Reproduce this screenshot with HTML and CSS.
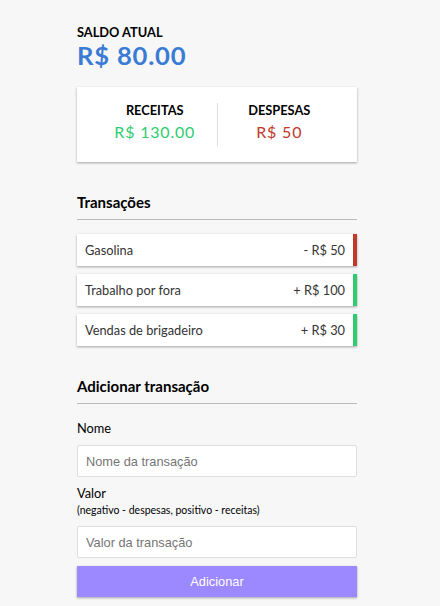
FILE: index.html
```html
<!DOCTYPE html>
<html lang="pt-BR">
<head>
<meta charset="UTF-8">
<title>Controle de despesas</title>
<link rel="stylesheet" href="styles.css">
</head>
<body>
<div class="container">
  <h4>Saldo atual</h4>
  <h1 class="balance">R$ 80.00</h1>

  <div class="inc-exp-container">
    <div>
      <h4>Receitas</h4>
      <p class="money plus">R$ 130.00</p>
    </div>
    <div>
      <h4>Despesas</h4>
      <p class="money minus">R$ 50</p>
    </div>
  </div>

  <h3>Transações</h3>
  <ul class="list">
    <li class="minus">Gasolina <span>- R$ 50</span></li>
    <li class="plus">Trabalho por fora <span>+ R$ 100</span></li>
    <li class="plus">Vendas de brigadeiro <span>+ R$ 30</span></li>
  </ul>

  <h3>Adicionar transação</h3>
  <form class="form">
    <div class="form-control">
      <label for="text">Nome</label>
      <input type="text" id="text" placeholder="Nome da transação">
    </div>
    <div class="form-control">
      <label class="label-two" for="amount">Valor <br><small>(negativo - despesas, positivo - receitas)</small></label>
      <input type="number" id="amount" placeholder="Valor da transação">
    </div>
    <button class="btn" type="button">Adicionar</button>
  </form>
</div>
</body>
</html>
```
FILE: styles.css
```css
* { box-sizing: border-box; }

body {
  background-color: #f7f7f7;
  display: flex;
  flex-direction: column;
  align-items: center;
  margin: 0;
  padding-right: 6px;
  font-family: "Lato", "Liberation Sans", sans-serif;
  font-size: 12.8px;
  color: #000;
}

.container {
  margin: 25px auto 24px;
  width: 280px;
}

h1 {
  letter-spacing: 0.8px;
  margin: 0;
  font-size: 25.6px;
  line-height: 31px;
  color: #3a7bd5;
}

h3 {
  font-size: 15px;
  line-height: 17px;
  border-bottom: 1px solid #bbb;
  padding-bottom: 8px;
  margin: 32px 0 8px;
}

h4 {
  margin: 0;
  font-size: 12.8px;
  line-height: 15px;
  text-transform: uppercase;
}

.inc-exp-container {
  background-color: #fff;
  box-shadow: 0 1px 3px rgba(0,0,0,0.12), 0 1px 2px rgba(0,0,0,0.24);
  padding: 16px;
  display: flex;
  justify-content: space-between;
  margin: 16px 0;
}

.inc-exp-container > div {
  flex: 1;
  text-align: center;
}

.inc-exp-container > div:first-of-type {
  border-right: 1px solid #dedede;
}

.money {
  font-size: 16px;
  line-height: 20px;
  letter-spacing: 0.8px;
  margin: 4px 0;
}

.money.plus { color: #2ecc71; }
.money.minus { color: #c0392b; }

.list {
  list-style-type: none;
  padding: 0;
  margin: 14px 0 32px;
}

.list li {
  background-color: #fff;
  box-shadow: 0 1px 3px rgba(0,0,0,0.12), 0 1px 2px rgba(0,0,0,0.24);
  color: #333;
  display: flex;
  justify-content: space-between;
  padding: 8px;
  line-height: 16px;
  margin: 8px 0;
}

.list li.plus { border-right: 4px solid #2ecc71; }
.list li.minus { border-right: 4px solid #c0392b; }

label {
  display: inline-block;
  margin: 8px 0;
  line-height: 17px;
  font-weight: 400;
}

.label-two {
  line-height: 16px;
}

label small {
  font-size: 10.5px;
}

input {
  border: 1px solid #dedede;
  border-radius: 2px;
  display: block;
  font-family: "Liberation Sans", Arial, sans-serif;
  font-size: 12.8px;
  padding: 8px;
  width: 100%;
  height: 32px;
  background: #fff;
}

input::placeholder { color: #757575; }

.btn {
  cursor: pointer;
  background-color: #9c88ff;
  box-shadow: 0 1px 3px rgba(0,0,0,0.12), 0 1px 2px rgba(0,0,0,0.24);
  color: #fff;
  border: 0;
  display: block;
  font-family: "Liberation Sans", Arial, sans-serif;
  font-size: 12.8px;
  margin: 8px 0 24px;
  padding: 8px;
  width: 100%;
  height: 31px;
}
```
